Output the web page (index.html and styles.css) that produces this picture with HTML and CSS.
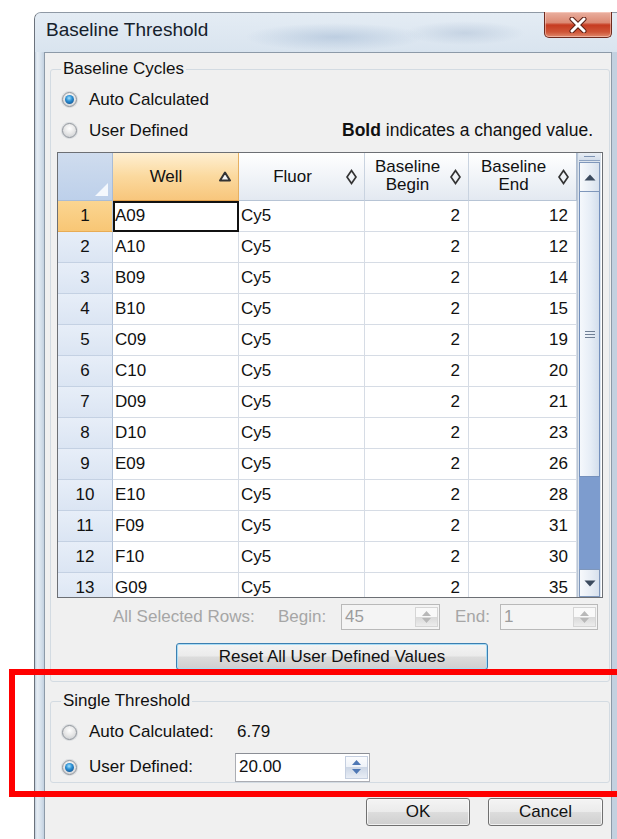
FILE: index.html
```html
<!DOCTYPE html>
<html lang="en">
<head>
<meta charset="utf-8">
<title>Baseline Threshold</title>
<link rel="stylesheet" href="styles.css">
</head>
<body>
<div class="window">
  <div class="titlebar">
    <span class="title">Baseline Threshold</span>
    <button class="close" aria-label="Close">
      <svg width="20" height="16" viewBox="0 0 20 16">
        <path d="M4 2 L16 14 M16 2 L4 14" stroke="#5a1f14" stroke-width="5" stroke-linecap="round"/>
        <path d="M4 2 L16 14 M16 2 L4 14" stroke="#ffffff" stroke-width="3" stroke-linecap="round"/>
      </svg>
    </button>
  </div>

  <div class="client">
    <fieldset class="group cycles">
      <legend>Baseline Cycles</legend>
      <div class="option"><span class="radio on"></span><span>Auto Calculated</span></div>
      <div class="option"><span class="radio"></span><span>User Defined</span><span class="hint"><b>Bold</b> indicates a changed value.</span></div>

      <div class="table">
        <div class="grid">
          <div class="hcell corner"><span class="corner-mark"></span></div>
          <div class="hcell sorted"><span class="hlabel">Well</span>
            <svg class="sort" width="12" height="11" viewBox="0 0 12 11"><polygon points="6,1.5 11,9.5 1,9.5" fill="#f6f6f6" stroke="#333" stroke-width="2" stroke-linejoin="round"/></svg>
          </div>
          <div class="hcell"><span class="hlabel">Fluor</span>
            <svg class="sort" width="11" height="16" viewBox="0 0 11 16"><polygon points="5.5,1.5 10,8 5.5,14.5 1,8" fill="none" stroke="#333" stroke-width="1.7"/></svg>
          </div>
          <div class="hcell"><span class="hlabel two">Baseline<br>Begin</span>
            <svg class="sort" width="11" height="16" viewBox="0 0 11 16"><polygon points="5.5,1.5 10,8 5.5,14.5 1,8" fill="none" stroke="#333" stroke-width="1.7"/></svg>
          </div>
          <div class="hcell last"><span class="hlabel two">Baseline<br>End</span>
            <svg class="sort" width="11" height="16" viewBox="0 0 11 16"><polygon points="5.5,1.5 10,8 5.5,14.5 1,8" fill="none" stroke="#333" stroke-width="1.7"/></svg>
          </div>

          <div class="rh current">1</div><div class="cell focus">A09</div><div class="cell">Cy5</div><div class="cell num">2</div><div class="cell num">12</div>
          <div class="rh">2</div><div class="cell">A10</div><div class="cell">Cy5</div><div class="cell num">2</div><div class="cell num">12</div>
          <div class="rh">3</div><div class="cell">B09</div><div class="cell">Cy5</div><div class="cell num">2</div><div class="cell num">14</div>
          <div class="rh">4</div><div class="cell">B10</div><div class="cell">Cy5</div><div class="cell num">2</div><div class="cell num">15</div>
          <div class="rh">5</div><div class="cell">C09</div><div class="cell">Cy5</div><div class="cell num">2</div><div class="cell num">19</div>
          <div class="rh">6</div><div class="cell">C10</div><div class="cell">Cy5</div><div class="cell num">2</div><div class="cell num">20</div>
          <div class="rh">7</div><div class="cell">D09</div><div class="cell">Cy5</div><div class="cell num">2</div><div class="cell num">21</div>
          <div class="rh">8</div><div class="cell">D10</div><div class="cell">Cy5</div><div class="cell num">2</div><div class="cell num">23</div>
          <div class="rh">9</div><div class="cell">E09</div><div class="cell">Cy5</div><div class="cell num">2</div><div class="cell num">26</div>
          <div class="rh">10</div><div class="cell">E10</div><div class="cell">Cy5</div><div class="cell num">2</div><div class="cell num">28</div>
          <div class="rh">11</div><div class="cell">F09</div><div class="cell">Cy5</div><div class="cell num">2</div><div class="cell num">31</div>
          <div class="rh">12</div><div class="cell">F10</div><div class="cell">Cy5</div><div class="cell num">2</div><div class="cell num">30</div>
          <div class="rh">13</div><div class="cell">G09</div><div class="cell">Cy5</div><div class="cell num">2</div><div class="cell num">35</div>
        </div>

        <div class="vscroll">
          <div class="sb-split"></div>
          <div class="sb-btn up">
            <svg width="12" height="7" viewBox="0 0 12 7"><polygon points="6,0.5 11.5,6.5 0.5,6.5" fill="#3b4a5e"/></svg>
          </div>
          <div class="sb-thumb"><span class="grip"></span></div>
          <div class="sb-track"></div>
          <div class="sb-btn down">
            <svg width="12" height="7" viewBox="0 0 12 7"><polygon points="0.5,0.5 11.5,0.5 6,6.5" fill="#3b4a5e"/></svg>
          </div>
        </div>
      </div>

      <div class="selrow">
        <span class="sel-label">All Selected Rows:</span>
        <span class="begin-label">Begin:</span>
        <div class="spin disabled w-begin"><span class="spin-text">45</span>
          <span class="spin-btns"><svg width="9" height="5" viewBox="0 0 9 5"><polygon points="4.5,0 9,5 0,5" fill="#b8b8b8"/></svg><svg width="9" height="5" viewBox="0 0 9 5"><polygon points="0,0 9,0 4.5,5" fill="#b8b8b8"/></svg></span>
        </div>
        <span class="end-label">End:</span>
        <div class="spin disabled w-end"><span class="spin-text">1</span>
          <span class="spin-btns"><svg width="9" height="5" viewBox="0 0 9 5"><polygon points="4.5,0 9,5 0,5" fill="#b8b8b8"/></svg><svg width="9" height="5" viewBox="0 0 9 5"><polygon points="0,0 9,0 4.5,5" fill="#b8b8b8"/></svg></span>
        </div>
      </div>

      <button class="btn reset">Reset All User Defined Values</button>
    </fieldset>

    <fieldset class="group single">
      <legend>Single Threshold</legend>
      <div class="option tight"><span class="radio"></span><span class="opt-label">Auto Calculated:</span><span class="value">6.79</span></div>
      <div class="option tight second"><span class="radio on"></span><span class="opt-label">User Defined:</span>
        <div class="spin w-user"><span class="spin-text">20.00</span>
          <span class="spin-btns active"><svg width="9" height="5" viewBox="0 0 9 5"><polygon points="4.5,0 9,5 0,5" fill="#4f78b5"/></svg><svg width="9" height="5" viewBox="0 0 9 5"><polygon points="0,0 9,0 4.5,5" fill="#4f78b5"/></svg></span>
        </div>
      </div>
    </fieldset>

    <div class="actions">
      <button class="btn ok">OK</button>
      <button class="btn cancel">Cancel</button>
    </div>
  </div>
</div>

<div class="callout"></div>
</body>
</html>
```

FILE: styles.css
```css
* { box-sizing: border-box; }

html, body {
  margin: 0;
  padding: 0;
  background: #ffffff;
}

body {
  position: relative;
  width: 617px;
  height: 839px;
  overflow: hidden;
  font-family: "Liberation Sans", Arial, sans-serif;
  font-size: 17px;
  color: #111111;
}

/* ---------- window frame ---------- */
.window {
  margin: 12px 0 0 34px;
  width: 583px;
  height: 827px;
  display: flex;
  flex-direction: column;
  border-left: 1px solid #6b727c;
  border-top: 1px solid #8f99a5;
  border-top-left-radius: 7px;
  background: linear-gradient(90deg, #bfcddc 0, #e6edf4 2px, #d6e1ec 6px, #c3d1e0 9px);
}

.titlebar {
  height: 39px;
  display: flex;
  align-items: flex-start;
  padding-left: 11px;
  border-top-left-radius: 6px;
  background:
    radial-gradient(ellipse 90px 14px at 300px 24px, rgba(150,175,205,0.45), rgba(150,175,205,0) 100%),
    radial-gradient(ellipse 60px 12px at 430px 20px, rgba(160,180,205,0.4), rgba(160,180,205,0) 100%),
    linear-gradient(180deg, #e4ecf4 0%, #d9e4ef 100%);
}

.title {
  margin-top: 5px;
  font-size: 19px;
  line-height: 24px;
  color: #16212c;
}

.close {
  margin-left: auto;
  margin-right: 5px;
  margin-top: -1px;
  width: 68px;
  height: 26px;
  padding: 0;
  display: flex;
  align-items: center;
  justify-content: center;
  border: 1px solid #6e2a1e;
  border-top: none;
  border-radius: 0 0 5px 5px;
  background: linear-gradient(180deg, #eab0a0 0%, #dc8a74 42%, #c63b20 52%, #cf5537 80%, #e08a6d 100%);
  box-shadow: inset 0 0 0 1px rgba(255,220,210,0.5);
}

/* ---------- client area ---------- */
.client {
  flex: 1;
  margin-left: 9px;
  width: 568px;
  border: 1px solid #8d9aa8;
  border-bottom: none;
  background: #f0f0f0;
}

.group {
  margin: 6px 1px 0 5px;
  padding: 6px 6px 11px 6px;
  border: 1px solid #d3dbe2;
  border-radius: 3px;
  min-width: 0;
}

.group legend {
  margin-left: 4px;
  padding: 0 2px;
  font-size: 17px;
  line-height: 20px;
}

.option {
  display: flex;
  align-items: center;
  height: 31px;
  padding-left: 5px;
}

.cycles .option:first-of-type { margin-top: -1px; }

.option.tight { height: 30px; }
.option.second { margin-top: 5px; }

.radio {
  position: relative;
  flex: none;
  width: 15px;
  height: 15px;
  margin-right: 12px;
  border-radius: 50%;
  border: 1px solid #8f949b;
  background: radial-gradient(circle at 50% 35%, #ffffff 0%, #e6e6e6 50%, #c4c8cd 100%);
  box-shadow: 0 0 0 1px rgba(200,205,210,0.6);
}

.radio.on::after {
  content: "";
  position: absolute;
  left: 2px;
  top: 2px;
  width: 9px;
  height: 9px;
  border-radius: 50%;
  background: radial-gradient(circle at 45% 35%, #a6e3ff 0%, #2b8fd3 40%, #0b3f7c 100%);
}

.hint {
  margin-left: auto;
  padding-right: 10px;
  font-size: 17.5px;
}

.opt-label { width: 146px; flex: none; }
.value { margin-left: 2px; }

/* ---------- grid ---------- */
.table {
  display: flex;
  height: 446px;
  margin-top: 6px;
  border: 1px solid #6c6f74;
  background: #ffffff;
  overflow: hidden;
}

.grid {
  display: grid;
  grid-template-columns: 55px 126px 126px 104px 108px;
  grid-template-rows: 48px;
  grid-auto-rows: 31px;
  font-size: 17px;
  line-height: 20px;
}

.hcell {
  display: flex;
  align-items: center;
  padding-right: 7px;
  border-right: 1px solid #c9d3e0;
  border-bottom: 1px solid #b7c4d5;
  background: linear-gradient(180deg, #ffffff 0%, #f1f4f8 50%, #e3e9f1 100%);
}

.hcell.last { border-right-color: #aebcd0; }

.hlabel {
  flex: 1;
  text-align: center;
}

.hlabel.two {
  line-height: 18px;
  margin-top: -2px;
}

.sort { flex: none; }

.hcell.sorted {
  background: linear-gradient(180deg, #feefd2 0%, #fbd99e 50%, #f8c67c 100%);
  border-right-color: #e6b061;
  border-bottom-color: #e3a04a;
}

.hcell.corner {
  position: relative;
  padding: 0;
  background: linear-gradient(180deg, #cfdcee 0%, #bdd0ea 100%);
  border-right-color: #a9bcd6;
  border-bottom-color: #a9bcd6;
}

.corner-mark {
  position: absolute;
  right: 4px;
  bottom: 4px;
  width: 0;
  height: 0;
  border-left: 13px solid transparent;
  border-bottom: 13px solid #f4f8fd;
}

.rh {
  display: flex;
  align-items: center;
  justify-content: center;
  border-right: 1px solid #b3c3d9;
  border-bottom: 1px solid #c4d1e3;
  background: linear-gradient(180deg, #e7eef8 0%, #dbe5f3 100%);
}

.rh.current {
  background: linear-gradient(180deg, #fbd591 0%, #f8c675 100%);
  border-bottom-color: #e8ac55;
}

.cell {
  display: flex;
  align-items: center;
  padding-left: 2px;
  border-right: 1px solid #d6dce5;
  border-bottom: 1px solid #d6dce5;
  white-space: nowrap;
}

.cell.num {
  justify-content: flex-end;
  padding-right: 8px;
}

.cell.focus {
  outline: 2px solid #111111;
  outline-offset: -2px;
}

/* ---------- vertical scrollbar ---------- */
.vscroll {
  width: 24px;
  display: flex;
  flex-direction: column;
  background: #dce4ee;
  border-left: 1px solid #b9c6d6;
  padding: 0 1px;
}

.sb-split {
  height: 8px;
  flex: none;
  border-bottom: 1px solid #8ea3c2;
  background: linear-gradient(180deg, #e9eef5, #d3ddea);
  position: relative;
}

.sb-split::after {
  content: "";
  position: absolute;
  left: 5px;
  right: 5px;
  top: 3px;
  height: 1px;
  background: #7e93b3;
}

.sb-btn {
  flex: none;
  display: flex;
  align-items: center;
  justify-content: center;
  border: 1px solid #7f97bb;
  background: linear-gradient(90deg, #f7f9fc 0%, #e6ecf4 60%, #d8e1ed 100%);
}

.sb-btn.up { height: 30px; margin-top: 1px; }
.sb-btn.down { height: 28px; }

.sb-thumb {
  flex: none;
  height: 285px;
  display: flex;
  align-items: center;
  justify-content: center;
  border: 1px solid #7490bc;
  border-top: none;
  background: linear-gradient(90deg, #f5f8fc 0%, #e6edf6 55%, #d3deec 100%);
}

.grip {
  width: 10px;
  height: 7px;
  background: repeating-linear-gradient(180deg, #6f7f95 0, #6f7f95 1px, transparent 1px, transparent 3px);
}

.sb-track {
  flex: 1;
  background: #7d9cce;
}

/* ---------- range row ---------- */
.selrow {
  display: flex;
  align-items: center;
  height: 26px;
  margin-top: 6px;
  padding-left: 56px;
  color: #a6a6a6;
}

.sel-label { width: 165px; flex: none; }
.begin-label { width: 63px; flex: none; }
.end-label { width: 45px; flex: none; margin-left: 15px; }

.spin {
  display: flex;
  align-items: stretch;
  height: 26px;
  border: 1px solid #abadb3;
  background: #ffffff;
  flex: none;
}

.spin-text {
  flex: 1;
  padding-left: 3px;
  display: flex;
  align-items: center;
}

.spin.disabled {
  background: #f4f4f4;
  border-color: #b9b9b9;
  color: #9c9c9c;
}

.w-begin { width: 99px; }
.w-end { width: 98px; }
.w-user { width: 135px; height: 29px; border-top-color: #8b8e95; }

.spin-btns {
  width: 23px;
  margin: 2px 1px 2px 0;
  display: flex;
  flex-direction: column;
  align-items: center;
  justify-content: space-evenly;
  border: 1px solid #d5d5d5;
  background: linear-gradient(180deg, #f9f9f9 0%, #f9f9f9 49%, #d9d9d9 50%, #ececec 100%);
}

.spin-btns.active {
  border-color: #c5cfe0;
  background: linear-gradient(180deg, #fbfcfe 0%, #eef2f8 49%, #cdd7e6 50%, #e8edf5 100%);
}

/* ---------- buttons ---------- */
.btn {
  font-family: inherit;
  font-size: 17px;
  color: #111111;
  border: 1px solid #707070;
  border-radius: 3px;
  padding: 0;
  background: linear-gradient(180deg, #f4f4f4 0%, #ebebeb 48%, #dcdcdc 52%, #cfcfcf 100%);
  box-shadow: inset 0 0 0 1px rgba(255,255,255,0.7);
}

.btn.reset {
  display: block;
  width: 312px;
  height: 27px;
  margin: 13px 0 0 119px;
  border-color: #3c7fb1;
  box-shadow: inset 0 0 0 1px #a9dcf5;
}

.single { margin-top: 9px; padding-bottom: 0; }

.actions {
  display: flex;
  justify-content: flex-end;
  gap: 18px;
  margin-top: 15px;
  padding-right: 8px;
}

.btn.ok { width: 104px; height: 28px; }
.btn.cancel { width: 115px; height: 28px; }

/* ---------- highlight frame drawn over the dialog ---------- */
.callout {
  position: absolute;
  left: 9px;
  top: 669px;
  width: 620px;
  height: 128px;
  border: 6px solid #ff0000;
  pointer-events: none;
}
```
